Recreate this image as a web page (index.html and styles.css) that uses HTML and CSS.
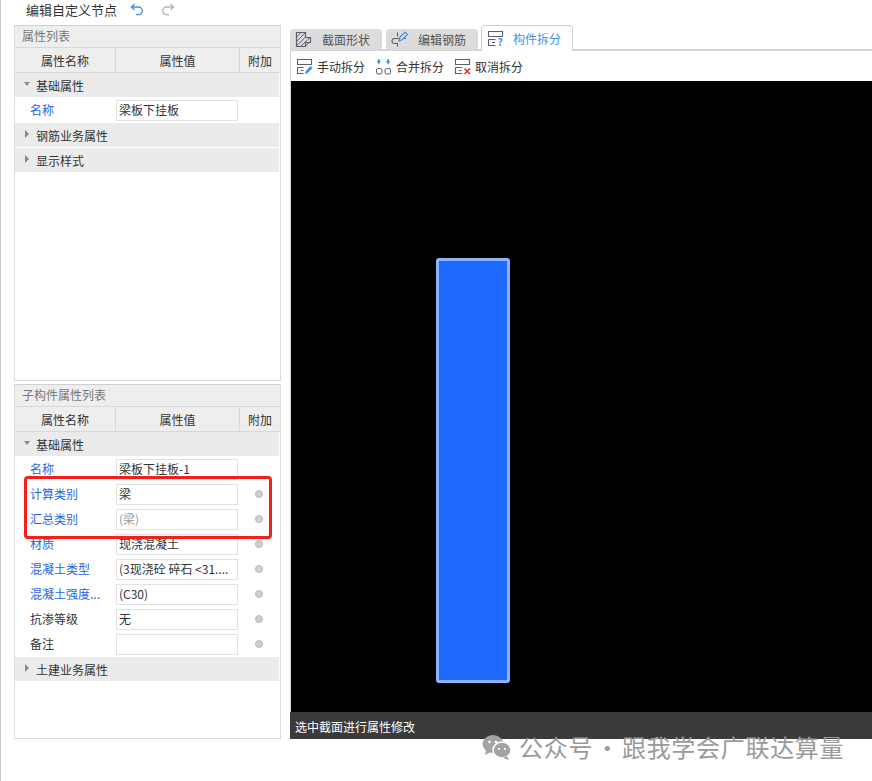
FILE: index.html
```html
<!DOCTYPE html>
<html lang="zh-CN">
  <head>
    <meta charset="UTF-8" />
    <title>编辑自定义节点</title>
    <link rel="stylesheet" href="styles.css">
  </head>
  <body>
    <div class="topbar">
      <span class="topbar-title">编辑自定义节点</span>
      <svg class="undo" width="14" height="14" viewBox="0 0 14 14"><path d="M4.500 1 1.500 4 4.500 7M2 4h6.500a3.800 3.800 0 0 1 0 7.600H6" fill="none" stroke="#3f8fe8" stroke-width="1.300"/></svg>
      <svg class="redo" width="14" height="14" viewBox="0 0 14 14"><path d="M9.500 1 12.500 4 9.500 7M12 4H5.500a3.800 3.800 0 0 0 0 7.600H8" fill="none" stroke="#b4b4b4" stroke-width="1.300"/></svg>
    </div>

    <div class="main">
      <div class="side">
        <section class="panel panel-top">
          <div class="panel-title">属性列表</div>
          <div class="thead"><span>属性名称</span><span>属性值</span><span>附加</span></div>
          <div class="group"><i class="arrow open"></i>基础属性</div>
          <div class="row"><span class="name link">名称</span><span class="val">梁板下挂板</span></div>
          <div class="group"><i class="arrow"></i>钢筋业务属性</div>
          <div class="group"><i class="arrow"></i>显示样式</div>
        </section>

        <section class="panel panel-bottom">
          <div class="panel-title">子构件属性列表</div>
          <div class="thead"><span>属性名称</span><span>属性值</span><span>附加</span></div>
          <div class="group"><i class="arrow open"></i>基础属性</div>
          <div class="row"><span class="name link">名称</span><span class="val">梁板下挂板-1</span></div>
          <div class="row"><span class="name link">计算类别</span><span class="val">梁</span><i class="dot"></i></div>
          <div class="row"><span class="name link">汇总类别</span><span class="val muted">(梁)</span><i class="dot"></i></div>
          <div class="row"><span class="name link">材质</span><span class="val">现浇混凝土</span><i class="dot"></i></div>
          <div class="row"><span class="name link">混凝土类型</span><span class="val">(3现浇砼 碎石 &lt;31....</span><i class="dot"></i></div>
          <div class="row"><span class="name link">混凝土强度...</span><span class="val">(C30)</span><i class="dot"></i></div>
          <div class="row"><span class="name">抗渗等级</span><span class="val">无</span><i class="dot"></i></div>
          <div class="row"><span class="name">备注</span><span class="val"></span><i class="dot"></i></div>
          <div class="group"><i class="arrow"></i>土建业务属性</div>
          <div class="red-box"></div>
        </section>
      </div>

      <div class="work">
        <div class="tabs">
          <div class="tab">
            <svg width="17" height="17" viewBox="0 0 17 17"><path d="M1.500 1.500h9v5h5v5h-5v4h-9z" fill="none" stroke="#5a5f6b" stroke-width="1.200"/><path d="M1.500 6 6 1.500M1.500 10.500 10 2M1.500 15 10 6.500M6 15l9-8.500M10.500 15l5-4.500" stroke="#5a5f6b" stroke-width="1"/></svg>
            <span>截面形状</span>
          </div>
          <div class="tab">
            <svg width="17" height="17" viewBox="0 0 17 17"><path d="M6.500 1.500v4M6.500 15.500v-3H3.500a2.500 2.500 0 0 1 0-5H15" fill="none" stroke="#5a5f6b" stroke-width="1.100"/><path d="M8 10l1-4 5-5 2.500 2.500-5 5z" fill="#dcdcdc" stroke="#3f8fe8" stroke-width="1.200"/></svg>
            <span>编辑钢筋</span>
          </div>
          <div class="tab active">
            <svg width="17" height="17" viewBox="0 0 17 17"><path d="M1.500 1.500h14v5h-14zM1.500 9.500h7M1.500 9.500v6h7M5 12.500h3" fill="none" stroke="#5a5f6b" stroke-width="1.100"/><text x="10.500" y="15.500" class="tab-q">?</text></svg>
            <span>构件拆分</span>
          </div>
        </div>

        <div class="tools">
          <div class="tool">
            <svg width="17" height="17" viewBox="0 0 17 17"><path d="M1.500 1.500h14v5h-14zM1.500 9.500h6M1.500 9.500v6h6M4.500 12.500h3" fill="none" stroke="#5a5f6b" stroke-width="1.100"/><path d="M9 16l.7-3 5-5 2 2-5 5z" fill="#3f8fe8"/></svg>
            <span>手动拆分</span>
          </div>
          <div class="tool">
            <svg width="17" height="17" viewBox="0 0 17 17"><rect x="1.500" y="10.500" width="5.500" height="5.500" rx="1.500" fill="none" stroke="#5a5f6b"/><rect x="10" y="10.500" width="5.500" height="5.500" rx="1.500" fill="none" stroke="#5a5f6b"/><path d="M3 1h1.600v2H6L3.800 6.500 1.800 3H3zM12.400 1H14v2h1.200L13.200 6.500 11 3h1.400z" fill="#3f8fe8"/></svg>
            <span>合并拆分</span>
          </div>
          <div class="tool">
            <svg width="17" height="17" viewBox="0 0 17 17"><path d="M1.500 1.500h14v5h-14zM1.500 9.500h7M1.500 9.500v6h7M4.500 12.500h3" fill="none" stroke="#5a5f6b" stroke-width="1.100"/><path d="M10.500 10.500l5.500 5.500M16 10.500 10.500 16" stroke="#e8262a" stroke-width="1.500"/></svg>
            <span>取消拆分</span>
          </div>
        </div>

        <div class="canvas">
          <div class="shape"></div>
        </div>
        <div class="status">选中截面进行属性修改</div>
      </div>
    </div>

    <div class="watermark">
      <svg width="30" height="26" viewBox="0 0 30 26">
        <ellipse cx="11" cy="10" rx="10.500" ry="9" fill="#a3a3a3"/>
        <path d="M4 16l-1 5 6-3z" fill="#a3a3a3"/>
        <ellipse cx="20" cy="16" rx="9" ry="8" fill="#a3a3a3" stroke="#fff" stroke-width="1.500"/>
        <path d="M25 22l2 4-6-2z" fill="#a3a3a3"/>
        <circle cx="7.500" cy="8" r="1.300" fill="#fff"/>
        <circle cx="14" cy="8" r="1.300" fill="#fff"/>
        <circle cx="17" cy="15" r="1.100" fill="#fff"/>
        <circle cx="23" cy="15" r="1.100" fill="#fff"/>
      </svg>
      <span>公众号 · 跟我学会广联达算量</span>
    </div>
  </body>
</html>
```
FILE: styles.css
```css
* {
  box-sizing: border-box;
}

html,
body {
  margin: 0;
  height: 781px;
  overflow: hidden;
}

body {
  position: relative;
  background: #fff;
  color: #333;
  font-family: "Noto Sans CJK SC", "Liberation Sans", sans-serif;
  font-size: 12px;
  border-left: 1px solid #c9c9c9;
}

.topbar {
  height: 25px;
  padding: 0 0 6px 25px;
  display: flex;
  align-items: center;
}

.topbar-title {
  font-size: 13px;
  line-height: 19px;
  width: 104px;
}

.undo {
  margin-right: 17px;
}

.main {
  display: flex;
  height: 714px;
}

.side {
  width: 267px;
  margin-left: 13px;
  display: flex;
  flex-direction: column;
  gap: 3px;
}

.panel {
  position: relative;
  border: 1px solid #dcdcdc;
  border-top-color: #d0d0d0;
}

.panel-top {
  height: 356px;
}

.panel-bottom {
  height: 355px;
}

.panel-title {
  height: 22px;
  padding-left: 7px;
  line-height: 20px;
  color: #777;
  background: #eee;
  border-bottom: 1px solid #d8d8d8;
}

.thead {
  height: 25px;
  display: grid;
  grid-template-columns: 100px 124px 41px;
  background: #eee;
  border-bottom: 1px solid #d8d8d8;
  text-align: center;
  line-height: 25px;
}

.thead span + span {
  border-left: 1px solid #d8d8d8;
}

.group {
  height: 24px;
  width: 264px;
  margin-bottom: 1px;
  display: flex;
  align-items: center;
  background: #ebebeb;
}

.arrow {
  width: 0;
  height: 0;
  margin: 0 7px 2px 10px;
  border-style: solid;
  border-width: 4px 0 4px 4px;
  border-color: transparent transparent transparent #888;
}

.arrow.open {
  margin: 0 6px 2px 9px;
  border-width: 4px 3.500px 0;
  border-color: #888 transparent transparent;
}

.row {
  height: 25px;
  padding-top: 2px;
  display: grid;
  grid-template-columns: 101px 122px 41px;
  align-items: start;
}

.name {
  padding-left: 15px;
  line-height: 20px;
  white-space: nowrap;
}

.link {
  color: #1f66e5;
}

.val {
  height: 21px;
  padding-left: 2px;
  border: 1px solid #e2e2e2;
  line-height: 18px;
  white-space: nowrap;
  overflow: hidden;
  background: #fff;
}

.muted {
  color: #999;
}

.dot {
  width: 8px;
  height: 8px;
  margin: 6px 0 0 17px;
  border-radius: 50%;
  background: #cfcfcf;
  border: 1px solid #b8b8b8;
}

.red-box {
  position: absolute;
  left: 9px;
  top: 91px;
  width: 248px;
  height: 63px;
  border: 3px solid #f0211c;
  border-radius: 4px;
}

.work {
  flex: 1;
  margin-left: 9px;
  display: flex;
  flex-direction: column;
  min-width: 0;
}

.tabs {
  height: 26px;
  display: flex;
  align-items: flex-end;
  gap: 4px;
  border-bottom: 2px solid #d4d4d4;
}

.tab {
  width: 92px;
  height: 21px;
  margin-bottom: -1px;
  padding-left: 5px;
  display: flex;
  align-items: center;
  gap: 10px;
  color: #555;
  background: #dcdcdc;
  border-radius: 4px 4px 0 0;
}

.tab.active {
  height: 26px;
  margin-bottom: -2px;
  margin-left: -1px;
  gap: 9px;
  color: #3f8fe8;
  background: #fff;
  border: 1px solid #ccd0d6;
  border-bottom: 0;
}

.tab-q {
  font-size: 10px;
  font-weight: bold;
  fill: #3f8fe8;
}

.tools {
  height: 30px;
  padding-left: 5px;
  display: flex;
  align-items: center;
  gap: 10px;
  border-left: 1px solid #d4d4d4;
}

.tool {
  display: flex;
  align-items: center;
  gap: 4px;
  color: #333;
}

.canvas {
  position: relative;
  flex: 1;
  background: #000;
  border-left: 1px solid #d4d4d4;
}

.shape {
  position: absolute;
  left: 145px;
  top: 177px;
  width: 74px;
  height: 425px;
  background: #1f6bff;
  border: 3px solid #8cb2ff;
  clip-path: polygon(2px 0, calc(100% - 2px) 0, 100% 2px, 100% calc(100% - 2px), calc(100% - 2px) 100%, 2px 100%, 0 calc(100% - 2px), 0 2px);
}

.status {
  height: 27px;
  padding-left: 5px;
  background: #3a3a3a;
  color: #fff;
  line-height: 29px;
}

.watermark {
  position: absolute;
  left: 481px;
  top: 733px;
  display: flex;
  align-items: center;
  gap: 7px;
  color: #9a9a9a;
  font-size: 24px;
  line-height: 28px;
  letter-spacing: 0.700px;
  word-spacing: -4px;
  white-space: nowrap;
}
```
